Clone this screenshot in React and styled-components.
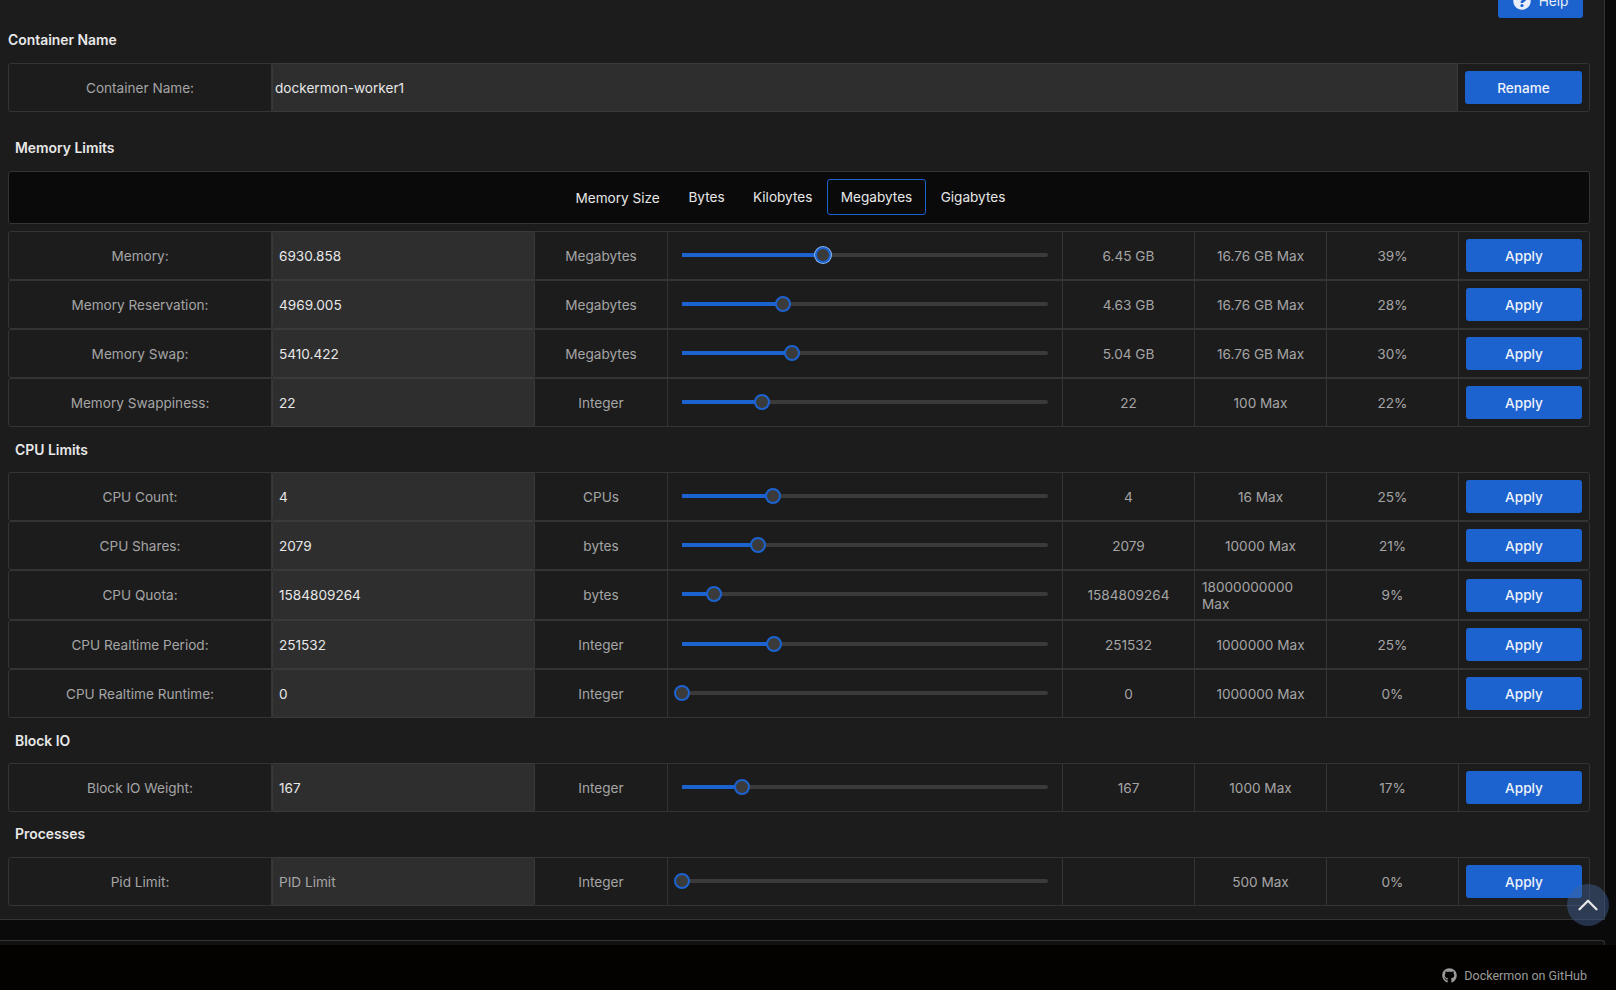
import React from "react";
import styled, { createGlobalStyle } from "styled-components";
import { FaGithub, FaQuestionCircle } from "react-icons/fa";
import { ChevronUp } from "lucide-react";

const GlobalStyle = createGlobalStyle`
  html, body {
    margin: 0;
    height: 100%;
    overflow: hidden;
    background: #0a0a0b;
    font-family: Inter, "Liberation Sans", sans-serif;
    font-size: 13.6px;
  }
  * { box-sizing: border-box; }
`;

const Page = styled.div`
  height: 990px;
  display: flex;
  flex-direction: column;
`;

const Panel = styled.main`
  width: 1605px;
  height: 920px;
  background: #1c1c1d;
  border-right: 1px solid #343435;
  border-bottom: 1px solid #343435;
  padding: 0 14px 0 8px;
`;

const HelpBar = styled.div`
  height: 18px;
  display: flex;
  justify-content: flex-end;
  align-items: flex-end;
  overflow: hidden;
  padding-right: 7px;
`;

const HelpButton = styled.button`
  flex: none;
  width: 85px;
  height: 35px;
  display: flex;
  align-items: center;
  justify-content: center;
  gap: 8px;
  border: 0;
  border-radius: 3px;
  background: #1c63d0;
  color: #e9eef8;
  font: inherit;
`;

const SectionTitle = styled.h2`
  margin: 0;
  height: ${(p) => p.$height}px;
  display: flex;
  align-items: center;
  padding: ${(p) => p.$top || 0}px 0 ${(p) => p.$bottom || 0}px ${(p) => (p.$flush ? 0 : 7)}px;
  font-size: 13.9px;
  font-weight: 600;
  color: #e8e8e8;
`;

const Row = styled.div`
  display: grid;
  grid-template-columns: ${(p) =>
    p.$wide ? "263px 1fr 131px" : "263px 263px 133px 395px 132px 132px 132px 1fr"};
  height: ${(p) => p.$height || 49}px;
  border: 1px solid #343435;
  border-radius: 3px;
`;

const Cell = styled.div`
  display: flex;
  align-items: center;
  justify-content: center;
  padding: 1px 7px 0;
  color: #a5a5a5;
  line-height: 17px;
  &:not(:last-child) {
    border-right: 1px solid #343435;
  }
`;

const InputCell = styled.input`
  min-width: 0;
  height: calc(100% + 2px);
  margin: -1px 0;
  border: 1px solid #3a3a3b;
  border-radius: 3px;
  outline: 0;
  padding: 0 ${(p) => (p.$wide ? 2 : 6)}px;
  background: #2e2e2f;
  color: #e8e8e8;
  font: inherit;
  &::placeholder {
    color: #a5a5a5;
    opacity: 1;
  }
`;

const SliderCell = styled(Cell)`
  padding: 0 14px;
  justify-content: stretch;
`;

const Track = styled.div`
  position: relative;
  flex: 1;
  height: 4px;
  margin-bottom: 2px;
  border-radius: 2px;
  background: #3a3a3b;
`;

const TrackFill = styled.div`
  height: 100%;
  background: #1c63d0;
`;

const Thumb = styled.div`
  position: absolute;
  top: 50%;
  width: 16px;
  height: 16px;
  margin: -8px 0 0 -8px;
  border-radius: 50%;
  border: 2px solid #1c63d0;
  background: #3b3b3c;
  box-shadow: ${(p) => (p.$focused ? "0 0 0 1px #8fb8f0" : "none")};
`;

const ActionCell = styled(Cell)`
  padding: 0 7px;
`;

const ActionButton = styled.button`
  width: 100%;
  height: 33px;
  border: 0;
  border-radius: 3px;
  padding: 1px 0 0;
  background: #1c63d0;
  color: #eef2fa;
  font: inherit;
  font-weight: 500;
`;

const TabBar = styled.nav`
  height: 53px;
  margin-bottom: 7px;
  display: flex;
  align-items: center;
  justify-content: center;
  padding: 0 3px 1px 0;
  background: #0a0a0b;
  border: 1px solid #343435;
  border-radius: 3px;
  color: #e8e8e8;
`;

const TabLabel = styled.span`
  padding: 1px 14.5px 0 0;
`;

const Tab = styled.a`
  height: 36px;
  display: flex;
  align-items: center;
  padding: 0 13.2px;
  border: 1px solid ${(p) => (p.$active ? "#1c63d0" : "transparent")};
  border-radius: 3px;
  color: #e8e8e8;
`;

const LowerPanel = styled.div`
  width: 1605px;
  height: 5px;
  margin-top: 20px;
  background: #111112;
  border-top: 1px solid #343435;
  border-right: 1px solid #343435;
  border-top-right-radius: 3px;
`;

const Footer = styled.footer`
  flex: 1;
  display: flex;
  justify-content: flex-end;
  align-items: center;
  gap: 7px;
  padding: 16px 29px 0 0;
  background: #030200;
  color: #9a9a9a;
  font-family: Roboto, sans-serif;
  font-size: 12.5px;
`;

const ScrollTop = styled.button`
  position: fixed;
  left: 1567px;
  top: 884px;
  width: 42px;
  height: 42px;
  display: flex;
  align-items: center;
  justify-content: center;
  border: 0;
  border-radius: 50%;
  background: rgba(66, 100, 150, 0.45);
  color: #e8e8e8;
  padding: 0;
`;

function LimitRow({ label, value, placeholder, unit, fill, current, max, percent, height, focused }) {
  return (
    <Row $height={height}>
      <Cell>{label}</Cell>
      <InputCell defaultValue={value} placeholder={placeholder} />
      <Cell>{unit}</Cell>
      <SliderCell>
        <Track>
          <TrackFill style={{ width: `${fill}%` }} />
          <Thumb $focused={focused} style={{ left: `${fill}%` }} />
        </Track>
      </SliderCell>
      <Cell>{current}</Cell>
      <Cell>{max}</Cell>
      <Cell>{percent}</Cell>
      <ActionCell>
        <ActionButton>Apply</ActionButton>
      </ActionCell>
    </Row>
  );
}

const memoryRows = [
  { label: "Memory:", value: "6930.858", unit: "Megabytes", fill: 38.5, current: "6.45 GB", max: "16.76 GB Max", percent: "39%", focused: true },
  { label: "Memory Reservation:", value: "4969.005", unit: "Megabytes", fill: 27.5, current: "4.63 GB", max: "16.76 GB Max", percent: "28%" },
  { label: "Memory Swap:", value: "5410.422", unit: "Megabytes", fill: 30, current: "5.04 GB", max: "16.76 GB Max", percent: "30%" },
  { label: "Memory Swappiness:", value: "22", unit: "Integer", fill: 21.8, current: "22", max: "100 Max", percent: "22%" },
];

const cpuRows = [
  { label: "CPU Count:", value: "4", unit: "CPUs", fill: 24.9, current: "4", max: "16 Max", percent: "25%" },
  { label: "CPU Shares:", value: "2079", unit: "bytes", fill: 20.8, current: "2079", max: "10000 Max", percent: "21%" },
  { label: "CPU Quota:", value: "1584809264", unit: "bytes", fill: 8.7, current: "1584809264", max: "18000000000 Max", percent: "9%", height: 50 },
  { label: "CPU Realtime Period:", value: "251532", unit: "Integer", fill: 25.1, current: "251532", max: "1000000 Max", percent: "25%" },
  { label: "CPU Realtime Runtime:", value: "0", unit: "Integer", fill: 0, current: "0", max: "1000000 Max", percent: "0%" },
];

export default function App() {
  return (
    <Page>
      <GlobalStyle />
      <Panel>
        <HelpBar>
          <HelpButton>
            <FaQuestionCircle size={18} />
            Help
          </HelpButton>
        </HelpBar>
        <SectionTitle $flush $height={45} $bottom={2}>Container Name</SectionTitle>
        <Row $wide>
          <Cell>Container Name:</Cell>
          <InputCell $wide defaultValue="dockermon-worker1" />
          <ActionCell>
            <ActionButton>Rename</ActionButton>
          </ActionCell>
        </Row>
        <SectionTitle $height={59} $top={12}>Memory Limits</SectionTitle>
        <TabBar>
          <TabLabel>Memory Size</TabLabel>
          <Tab>Bytes</Tab>
          <Tab>Kilobytes</Tab>
          <Tab $active>Megabytes</Tab>
          <Tab>Gigabytes</Tab>
        </TabBar>
        {memoryRows.map((row) => (
          <LimitRow key={row.label} {...row} />
        ))}
        <SectionTitle $height={45}>CPU Limits</SectionTitle>
        {cpuRows.map((row) => (
          <LimitRow key={row.label} {...row} />
        ))}
        <SectionTitle $height={45}>Block IO</SectionTitle>
        <LimitRow label="Block IO Weight:" value="167" unit="Integer" fill={16.4} current="167" max="1000 Max" percent="17%" />
        <SectionTitle $height={45} $bottom={2}>Processes</SectionTitle>
        <LimitRow label="Pid Limit:" placeholder="PID Limit" unit="Integer" fill={0} current="" max="500 Max" percent="0%" />
      </Panel>
      <LowerPanel />
      <Footer>
        <FaGithub size={15} />
        Dockermon on GitHub
      </Footer>
      <ScrollTop aria-label="Scroll to top">
        <ChevronUp size={34} strokeWidth={1.6} />
      </ScrollTop>
    </Page>
  );
}
